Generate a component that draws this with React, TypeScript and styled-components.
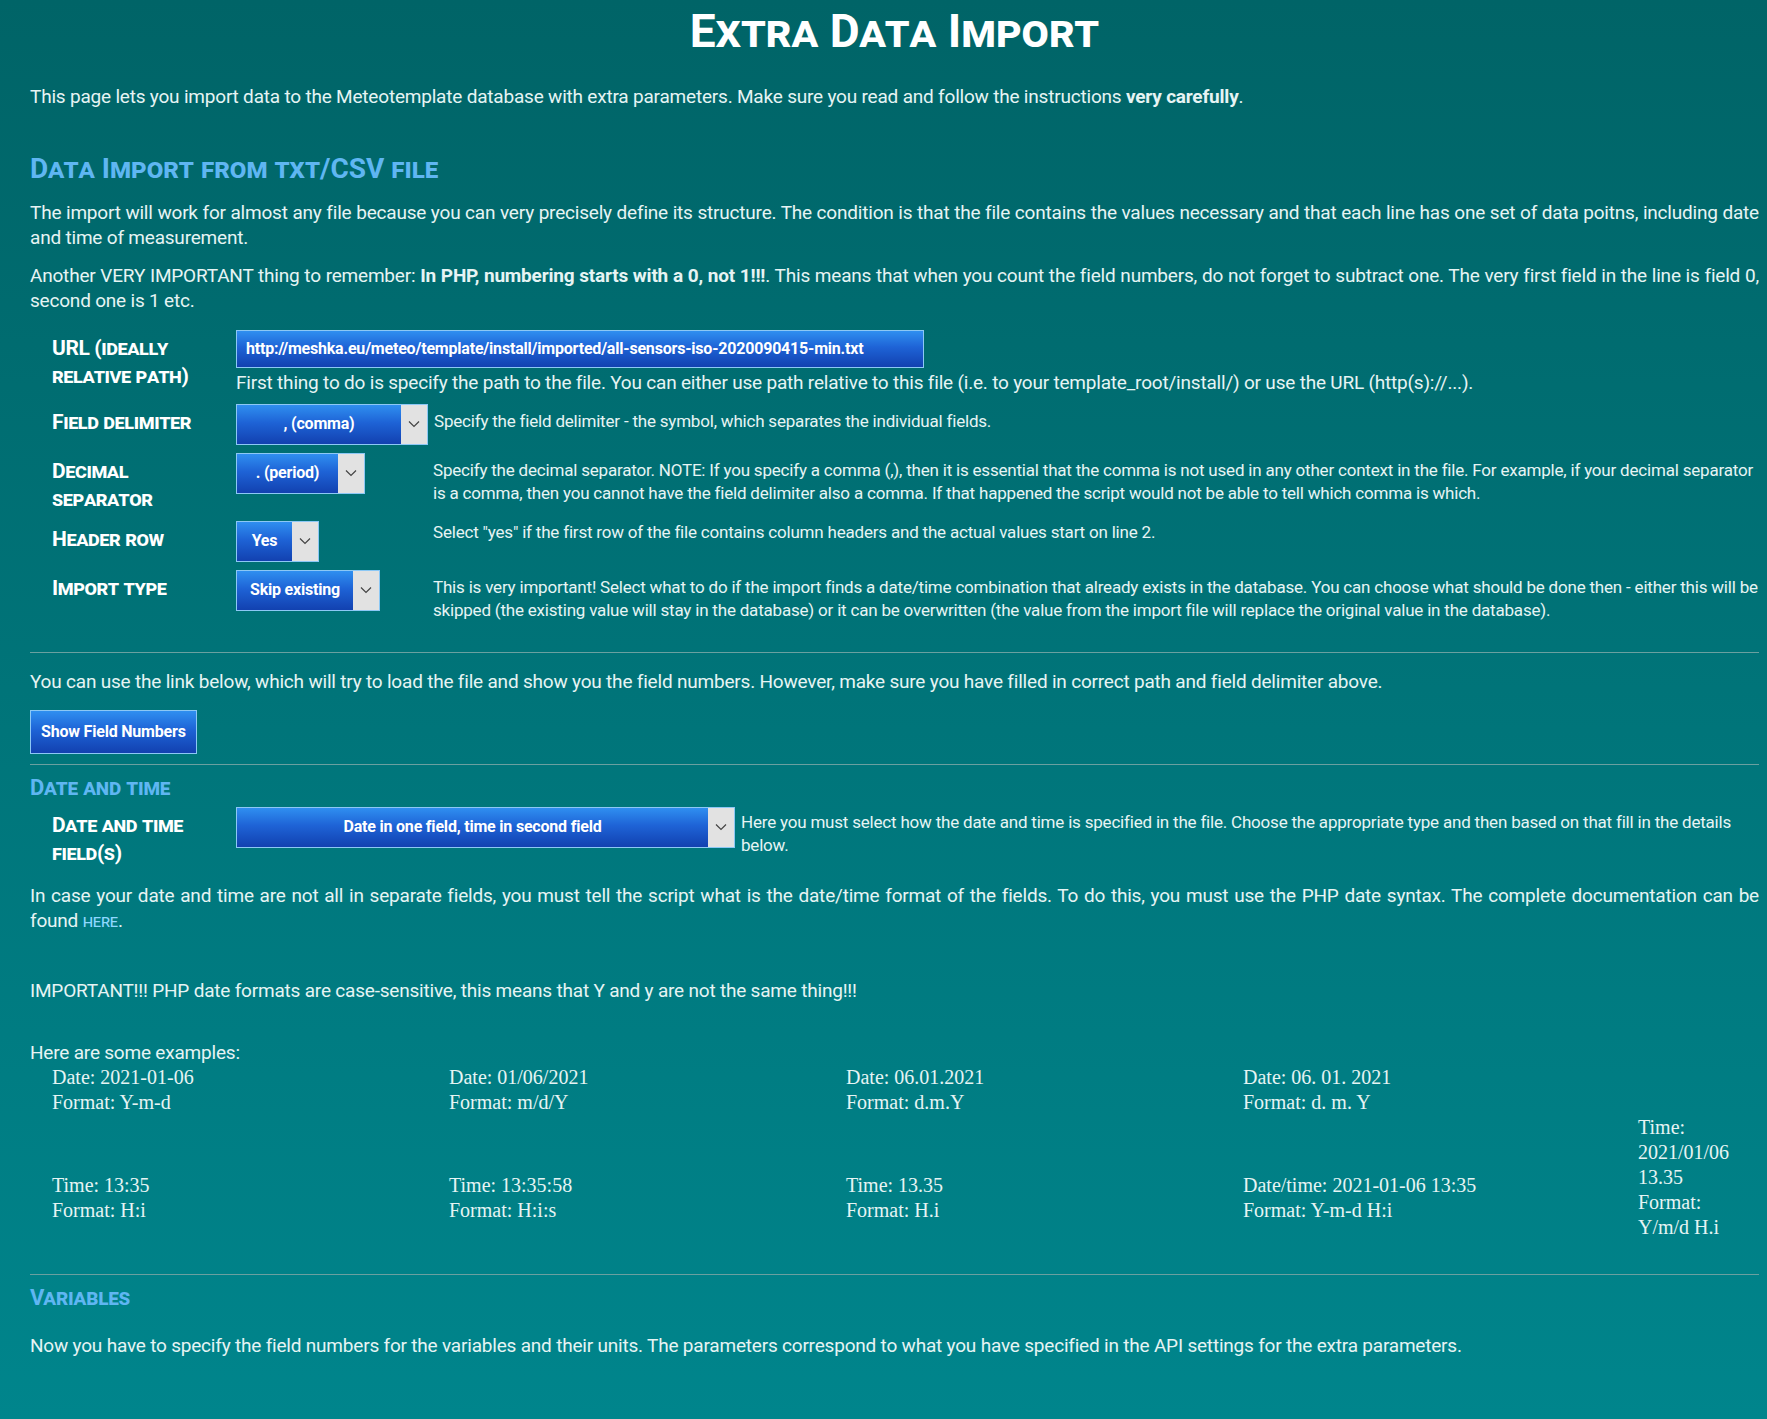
import React from 'react'
import styled, { createGlobalStyle } from 'styled-components'

const Global = createGlobalStyle`
  html, body { margin: 0; padding: 0; }
  body {
    background: linear-gradient(180deg, #006467 0%, #00858c 100%);
    min-height: 1419px;
    font-family: Roboto, "Liberation Sans", sans-serif;
    color: #e6f4f4;
  }
`

const Page = styled.div`
  padding: 0 8px 40px 30px;
  font-size: 19px;
  letter-spacing: -0.2px;
  line-height: 1.35;
`

const Title = styled.h1`
  text-align: center;
  font-variant: small-caps;
  font-size: 46px;
  color: #fff;
  margin: 0;
  padding-top: 0;
  font-weight: 700;
  letter-spacing: 0;
`

const P = styled.p<{ $top?: number }>`
  margin: ${p => p.$top ?? 12}px 0 0;
  text-align: justify;
`

const H2 = styled.h2<{ $top?: number }>`
  font-variant: small-caps;
  color: #5fb6f2;
  font-size: 28px;
  margin: ${p => p.$top ?? 40}px 0 10px;
  font-weight: 700;
  letter-spacing: 0;
`

const H3 = styled.h3`
  font-variant: small-caps;
  color: #5fb6f2;
  font-size: 22px;
  margin: 6px 0 4px;
  font-weight: 700;
`

const Form = styled.div`
  display: grid;
  grid-template-columns: 168px 1fr;
  column-gap: 16px;
  row-gap: 8px;
  padding-left: 22px;
  margin-top: 16px;
`

const Label = styled.div`
  font-variant: small-caps;
  font-weight: 700;
  font-size: 21px;
  color: #fff;
  line-height: 28px;
  padding-top: 4px;
  letter-spacing: -0.4px;
`

const Cell = styled.div<{ $col?: boolean }>`
  display: flex;
  flex-direction: ${p => (p.$col ? 'column' : 'row')};
  align-items: flex-start;
  gap: 6px;
`

const blue = 'linear-gradient(180deg, #2f8ff0 0%, #1e63d6 45%, #1241b0 100%)'

const Input = styled.div`
  width: 688px;
  height: 38px;
  background: ${blue};
  border: 1px solid #8cc8f5;
  color: #fff;
  font-weight: 700;
  font-size: 16px;
  display: flex;
  align-items: center;
  padding-left: 9px;
  box-sizing: border-box;
`

const Select = styled.div<{ $w: number }>`
  width: ${p => p.$w}px;
  height: 41px;
  border: 1px solid #8cc8f5;
  display: flex;
  flex: none;
  box-sizing: border-box;
`

const SelVal = styled.div`
  flex: 1;
  background: ${blue};
  color: #fff;
  font-weight: 700;
  font-size: 16px;
  display: flex;
  align-items: center;
  justify-content: center;
`

const Arrow = styled.div`
  width: 26px;
  background: #e2e2e2;
  display: flex;
  align-items: center;
  justify-content: center;
`

const Help = styled.div<{ $left?: number }>`
  font-size: 17px;
  line-height: 23px;
  margin-left: ${p => p.$left ?? 0}px;
  padding-top: 6px;
`

const Hr = styled.hr`
  border: none;
  border-top: 1px solid #6aa0a0;
  margin: 30px 0 16px;
`

const Button = styled.div`
  display: inline-block;
  margin-top: 16px;
  background: ${blue};
  border: 1px solid #8cc8f5;
  color: #fff;
  font-weight: 700;
  font-size: 16px;
  padding: 10px 10px;
`

const Link = styled.span`
  font-variant: small-caps;
  color: #8fd8ff;
  font-size: 17px;
`

const Examples = styled.div`
  display: grid;
  grid-template-columns: 397px 397px 397px 397px 1fr;
  padding-left: 22px;
  font-family: "Liberation Serif", serif;
  font-size: 20px;
  line-height: 25px;
  letter-spacing: 0;
`

const Ex = styled.div<{ $top?: number }>`
  margin-top: ${p => p.$top ?? 0}px;
`

const Chev = () => (
  <svg width="12" height="8" viewBox="0 0 12 8">
    <path d="M1 1.5 L6 6.5 L11 1.5" fill="none" stroke="#444" strokeWidth="1.2" />
  </svg>
)

const Sel = ({ w, v }: { w: number; v: string }) => (
  <Select $w={w}>
    <SelVal>{v}</SelVal>
    <Arrow>
      <Chev />
    </Arrow>
  </Select>
)

export default function App() {
  return (
    <>
      <Global />
      <Page>
        <Title>Extra Data Import</Title>
        <P $top={22}>
          This page lets you import data to the Meteotemplate database with extra parameters. Make sure you read and follow the instructions <b>very carefully</b>.
        </P>
        <H2 $top={40}>Data Import from txt/CSV file</H2>
        <P>
          The import will work for almost any file because you can very precisely define its structure. The condition is that the file contains the values necessary and that each line has one set of data poitns, including date and time of measurement.
        </P>
        <P>
          Another VERY IMPORTANT thing to remember: <b>In PHP, numbering starts with a 0, not 1!!!</b>. This means that when you count the field numbers, do not forget to subtract one. The very first field in the line is field 0, second one is 1 etc.
        </P>
        <Form>
          <Label>URL (ideally relative path)</Label>
          <Cell $col style={{ gap: 2 }}>
            <Input>http://meshka.eu/meteo/template/install/imported/all-sensors-iso-2020090415-min.txt</Input>
            <span>First thing to do is specify the path to the file. You can either use path relative to this file (i.e. to your template_root/install/) or use the URL (http(s)://...).</span>
          </Cell>
          <Label>Field delimiter</Label>
          <Cell>
            <Sel w={192} v=", (comma)" />
            <Help>Specify the field delimiter - the symbol, which separates the individual fields.</Help>
          </Cell>
          <Label>Decimal separator</Label>
          <Cell>
            <Sel w={129} v=". (period)" />
            <Help $left={62}>
              Specify the decimal separator. NOTE: If you specify a comma (,), then it is essential that the comma is not used in any other context in the file. For example, if your decimal separator is a comma, then you cannot have the field delimiter also a comma. If that happened the script would not be able to tell which comma is which.
            </Help>
          </Cell>
          <Label>Header row</Label>
          <Cell>
            <Sel w={83} v="Yes" />
            <Help $left={108} style={{ paddingTop: 0 }}>
              Select "yes" if the first row of the file contains column headers and the actual values start on line 2.
            </Help>
          </Cell>
          <Label>Import type</Label>
          <Cell>
            <Sel w={144} v="Skip existing" />
            <Help $left={47}>
              This is very important! Select what to do if the import finds a date/time combination that already exists in the database. You can choose what should be done then - either this will be skipped (the existing value will stay in the database) or it can be overwritten (the value from the import file will replace the original value in the database).
            </Help>
          </Cell>
        </Form>
        <Hr />
        <P $top={0}>
          You can use the link below, which will try to load the file and show you the field numbers. However, make sure you have filled in correct path and field delimiter above.
        </P>
        <Button>Show Field Numbers</Button>
        <Hr style={{ marginTop: 10, marginBottom: 8 }} />
        <H3>Date and time</H3>
        <Form style={{ marginTop: 0 }}>
          <Label>Date and time field(s)</Label>
          <Cell>
            <Sel w={499} v="Date in one field, time in second field" />
            <Help style={{ paddingTop: 4 }}>
              Here you must select how the date and time is specified in the file. Choose the appropriate type and then based on that fill in the details below.
            </Help>
          </Cell>
        </Form>
        <P $top={16}>
          In case your date and time are not all in separate fields, you must tell the script what is the date/time format of the fields. To do this, you must use the PHP date syntax. The complete documentation can be found <Link>here</Link>.
        </P>
        <P $top={44}>IMPORTANT!!! PHP date formats are case-sensitive, this means that Y and y are not the same thing!!!</P>
        <P $top={36}>Here are some examples:</P>
        <Examples>
          <Ex>Date: 2021-01-06<br />Format: Y-m-d</Ex>
          <Ex>Date: 01/06/2021<br />Format: m/d/Y</Ex>
          <Ex>Date: 06.01.2021<br />Format: d.m.Y</Ex>
          <Ex>Date: 06. 01. 2021<br />Format: d. m. Y</Ex>
          <Ex />
          <Ex $top={58}>Time: 13:35<br />Format: H:i</Ex>
          <Ex $top={58}>Time: 13:35:58<br />Format: H:i:s</Ex>
          <Ex $top={58}>Time: 13.35<br />Format: H.i</Ex>
          <Ex $top={58}>Date/time: 2021-01-06 13:35<br />Format: Y-m-d H:i</Ex>
          <Ex $top={0} style={{ marginLeft: -2 }}>Time:<br />2021/01/06<br />13.35<br />Format:<br />Y/m/d H.i</Ex>
        </Examples>
        <Hr style={{ marginTop: 34, marginBottom: 8 }} />
        <H3>Variables</H3>
        <P $top={20}>
          Now you have to specify the field numbers for the variables and their units. The parameters correspond to what you have specified in the API settings for the extra parameters.
        </P>
      </Page>
    </>
  )
}
